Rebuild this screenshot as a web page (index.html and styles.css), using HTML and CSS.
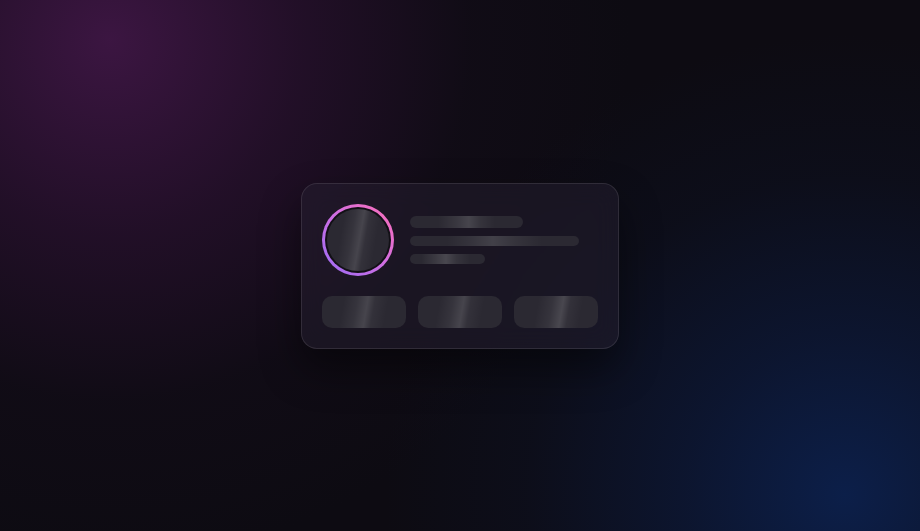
FILE: index.html
```html
<!DOCTYPE html>
<html lang="en">
<head>
<meta charset="utf-8">
<title>Profile skeleton</title>
<link rel="stylesheet" href="styles.css">
</head>
<body>
<main class="stage">
  <section class="card">
    <div class="top">
      <div class="avatar-ring">
        <div class="avatar-gap">
          <div class="avatar sk sk-diag"></div>
        </div>
      </div>
      <div class="lines">
        <div class="line line-1 sk sk-h1"></div>
        <div class="line line-2 sk sk-h2"></div>
        <div class="line line-3 sk sk-h3"></div>
      </div>
    </div>
    <div class="actions">
      <div class="btn sk sk-diag"></div>
      <div class="btn sk sk-diag"></div>
      <div class="btn sk sk-diag2"></div>
    </div>
  </section>
</main>
</body>
</html>
```

FILE: styles.css
```css
* { box-sizing: border-box; }
html, body { margin: 0; height: 100%; }
body {
  font-family: "Inter", "Liberation Sans", sans-serif;
  background-color: #0d0b12;
  background-image:
    radial-gradient(circle at 110px 40px, rgba(62, 22, 68, 0.95) 0px, rgba(48, 18, 54, 0.6) 190px, rgba(28, 14, 34, 0.22) 360px, rgba(13, 11, 18, 0) 520px),
    radial-gradient(circle at 845px 495px, rgba(12, 32, 76, 0.95) 0px, rgba(12, 28, 66, 0.6) 160px, rgba(12, 22, 48, 0.25) 320px, rgba(13, 11, 18, 0) 460px);
}
.stage {
  height: 100%;
  display: flex;
  align-items: center;
  justify-content: center;
}
.card {
  width: 318px;
  height: 166px;
  padding: 20px;
  border: 1px solid rgba(255, 255, 255, 0.10);
  border-radius: 16px;
  background: rgba(40, 34, 50, 0.45);
  backdrop-filter: blur(12px);
  box-shadow: 0 20px 40px rgba(0, 0, 0, 0.45);
  display: flex;
  flex-direction: column;
  gap: 20px;
}
.top {
  display: flex;
  align-items: center;
  gap: 16px;
}
.avatar-ring {
  width: 72px;
  height: 72px;
  flex: none;
  border-radius: 50%;
  padding: 3px;
  background: linear-gradient(225deg, #ff6fb5 0%, #d46ee0 45%, #9a6cf7 100%);
}
.avatar-gap {
  width: 100%;
  height: 100%;
  border-radius: 50%;
  padding: 2px;
  background: #121016;
}
.avatar {
  width: 100%;
  height: 100%;
  border-radius: 50%;
}
.lines {
  flex: 1;
  display: flex;
  flex-direction: column;
  gap: 8px;
}
.line { border-radius: 6px; }
.line-1 { width: 60%; height: 12px; }
.line-2 { width: 90%; height: 10px; }
.line-3 { width: 40%; height: 10px; }
.actions {
  display: grid;
  grid-template-columns: repeat(3, 1fr);
  gap: 12px;
}
.btn {
  height: 32px;
  border-radius: 10px;
}
.sk { background-color: #2b2932; }
.sk-diag {
  background-image: linear-gradient(100deg, rgba(255,255,255,0) 25%, rgba(255,255,255,0.05) 40%, rgba(255,255,255,0.13) 52%, rgba(255,255,255,0.04) 60%, rgba(255,255,255,0) 75%);
}
.sk-diag2 {
  background-image: linear-gradient(100deg, rgba(255,255,255,0) 28%, rgba(255,255,255,0.05) 44%, rgba(255,255,255,0.14) 56%, rgba(255,255,255,0.04) 64%, rgba(255,255,255,0) 78%);
}
.sk-h1 {
  background-image: linear-gradient(90deg, rgba(255,255,255,0) 25%, rgba(255,255,255,0.07) 42%, rgba(255,255,255,0.13) 52%, rgba(255,255,255,0.05) 62%, rgba(255,255,255,0) 75%);
}
.sk-h2 {
  background-image: linear-gradient(90deg, rgba(255,255,255,0) 22%, rgba(255,255,255,0.05) 36%, rgba(255,255,255,0.11) 49%, rgba(255,255,255,0.05) 62%, rgba(255,255,255,0) 78%);
}
.sk-h3 {
  background-image: linear-gradient(90deg, rgba(255,255,255,0) 15%, rgba(255,255,255,0.07) 33%, rgba(255,255,255,0.14) 48%, rgba(255,255,255,0.05) 62%, rgba(255,255,255,0) 80%);
}
```
